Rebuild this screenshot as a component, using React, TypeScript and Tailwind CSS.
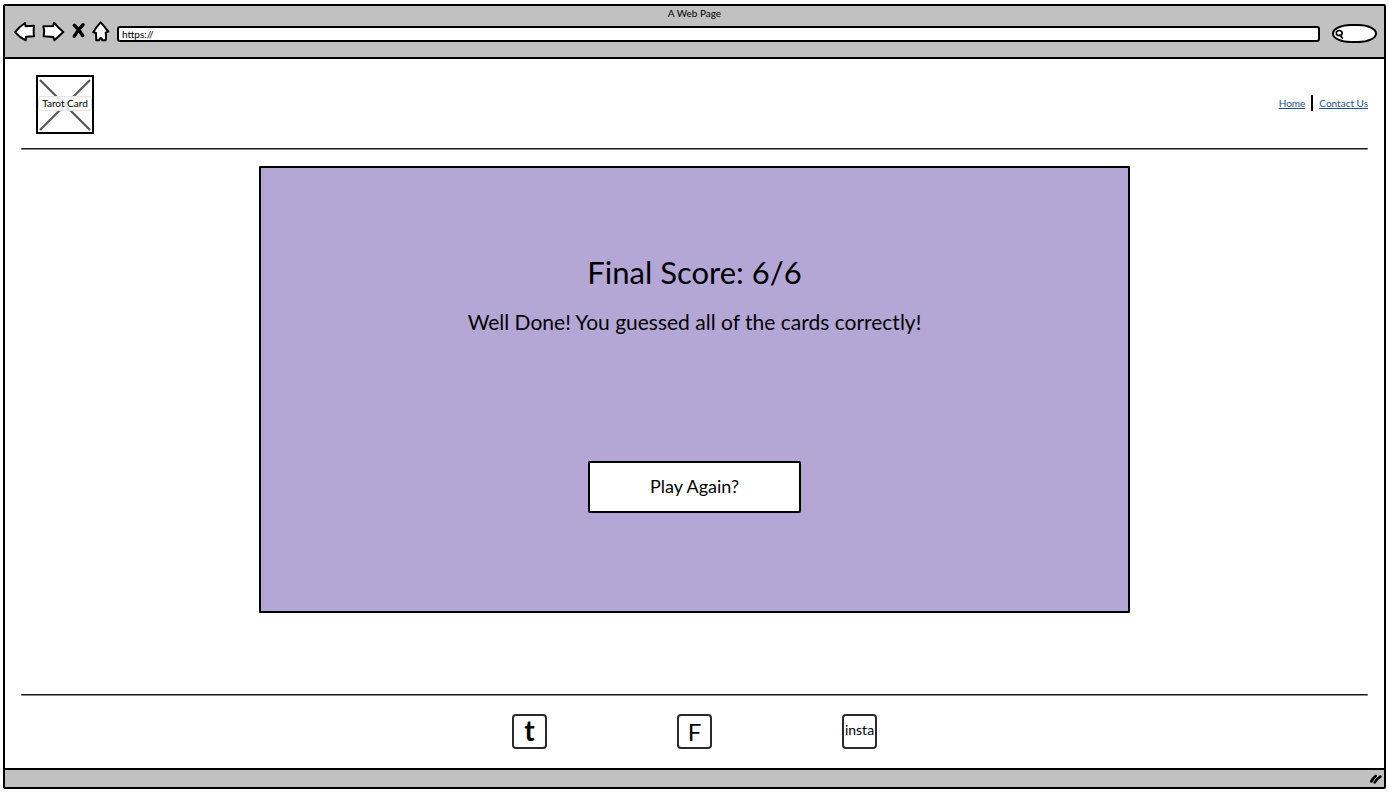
import React from "react";

const iconStroke = {
  fill: "white",
  stroke: "black",
  strokeWidth: 6,
  strokeLinejoin: "round" as const,
  strokeLinecap: "round" as const,
};

function BackIcon() {
  return (
    <svg viewBox="42 63 63 63" className="block h-[21px] w-[21px]" aria-hidden="true">
      <path d="M45 97 Q58 80 75 69 L77 79 L102 77 Q100 93 102 109 L78 110 L77 121 Q59 112 45 97Z" {...iconStroke} />
    </svg>
  );
}

function ForwardIcon() {
  return (
    <svg viewBox="123 63 69 63" className="block h-[21px] w-[23px]" aria-hidden="true">
      <path d="M127 79 L156 78 L159 68 Q172 84 187 96 Q174 108 160 121 L157 111 L128 109 Q132 94 127 79Z" {...iconStroke} />
    </svg>
  );
}

function StopIcon() {
  return (
    <svg viewBox="216 63 39 63" className="block h-[21px] w-[13px]" aria-hidden="true">
      <path d="M223 76 Q237 88 248 107 M249 74 Q234 88 223 109" fill="none" stroke="black" strokeWidth="10" strokeLinecap="round" />
    </svg>
  );
}

function HomeIcon() {
  return (
    <svg viewBox="273 63 54 63" className="block h-[21px] w-[18px]" aria-hidden="true">
      <path d="M299 67 Q311 80 322 95 L314 98 Q316 110 314 121 L304 121 Q302 113 299 114 Q295 115 295 121 L286 121 L285 99 L277 97 Q286 80 299 67Z" {...iconStroke} />
    </svg>
  );
}

function SearchIcon() {
  return (
    <svg viewBox="0 0 27 30" className="block h-[10px] w-[9px] shrink-0" aria-hidden="true">
      <path d="M5 8 Q13 1 20 8 Q24 14 18 19 Q10 22 5 17 Q3 12 5 8Z M15 18 L22 27" fill="none" stroke="black" strokeWidth="5" strokeLinecap="round" />
    </svg>
  );
}

function GripIcon() {
  return (
    <svg viewBox="0 0 36 30" className="block h-[10px] w-[12px]" aria-hidden="true">
      <path d="M4 22 Q9 13 17 6 M14 25 Q20 15 31 8" fill="none" stroke="black" strokeWidth="8" strokeLinecap="round" />
    </svg>
  );
}

function Rule() {
  return <hr className="mx-4 h-[2px] rounded-full border-t border-b border-t-[#1c1c1c] border-b-[#8a8a8a]" />;
}

function BrowserBar() {
  return (
    <header className="border-b-2 border-black bg-[#c1c1c1] pb-3.5">
      <p className="h-3.5 text-center text-[10px] leading-[14px]">A Web Page</p>
      <div className="flex items-center pr-[7px] pl-[9px]">
        <div className="flex items-center gap-[7px]">
          <button type="button" aria-label="Back"><BackIcon /></button>
          <button type="button" aria-label="Forward"><ForwardIcon /></button>
          <button type="button" aria-label="Stop"><StopIcon /></button>
          <button type="button" aria-label="Home page"><HomeIcon /></button>
        </div>
        <input
          type="text"
          aria-label="Address"
          defaultValue="https://"
          className="mt-1 ml-[7px] h-4 min-w-0 flex-1 rounded-[3px] border-2 border-black bg-white px-[3px] text-[10px] leading-3 outline-none"
        />
        <label className="mt-1 ml-3 flex h-[19px] w-[45px] items-center rounded-[50%/60%] border-2 border-black bg-white pl-px">
          <SearchIcon />
          <input type="search" aria-label="Search" className="h-3 w-full min-w-0 bg-transparent text-[10px] outline-none" />
        </label>
      </div>
    </header>
  );
}

function Logo() {
  return (
    <div className="relative flex h-[59px] w-[58px] items-center justify-center border-2 border-black bg-white pb-0.5">
      <svg viewBox="0 0 54 55" className="absolute inset-0 h-full w-full" aria-hidden="true">
        <path d="M2 3 L52 53 M52 3 L2 53" stroke="#5c5c5c" strokeWidth="2.4" />
      </svg>
      <span className="relative w-full rounded-[3px] border border-[#e4e4e4] bg-white/85 text-center text-[10px] leading-[13px] whitespace-nowrap">
        Tarot Card
      </span>
    </div>
  );
}

const tile = "flex h-[35px] w-[35px] items-center justify-center rounded-[4px] border-2 border-[#2a2a2a] bg-white";

export default function App() {
  return (
    <div className="flex min-h-screen flex-col bg-white px-[3px] py-1 font-['Lato','Open_Sans',sans-serif] text-black">
      <div className="flex flex-1 flex-col rounded-[2px] border-2 border-black">
        <BrowserBar />

        <div className="flex flex-1 flex-col bg-white">
          <div className="flex items-center justify-between pt-4 pr-4 pb-3.5 pl-[31px]">
            <Logo />
            <nav className="flex items-center gap-1.5 pb-1 text-[10px] leading-4 text-[#1c5490]">
              <a href="#home" className="underline">Home</a>
              <span className="h-4 w-0.5 bg-black" />
              <a href="#contact" className="underline">Contact Us</a>
            </nav>
          </div>
          <Rule />

          <main className="flex-1 px-4 pt-4 pb-6">
            <section className="mx-auto flex max-w-[871px] flex-col items-center rounded-[1px] border-2 border-black bg-[#b4a7d6] pt-[84px] pb-[98px]">
              <h1 className="text-[31px] leading-10">Final Score: 6/6</h1>
              <p className="mt-4 text-[21px] leading-7">Well Done! You guessed all of the cards correctly!</p>
              <button type="button" className="mt-[125px] h-[52px] w-[213px] rounded-[2px] border-2 border-black bg-white pb-0.5 text-[18px] leading-6">
                Play Again?
              </button>
            </section>
          </main>

          <Rule />
          <footer className="flex justify-center gap-[130px] pt-[18px] pb-[19px]">
            <a href="#twitter" className={tile + " pb-1 text-[28px] leading-7 font-bold"}>t</a>
            <a href="#facebook" className={tile + " text-[24px] leading-8"}>F</a>
            <a href="#instagram" className={tile + " pb-1 text-[14px] leading-7"}>insta</a>
          </footer>
        </div>

        <div className="flex h-[19px] items-center justify-end border-t-2 border-black bg-[#c1c1c1] pr-0.5">
          <GripIcon />
        </div>
      </div>
    </div>
  );
}
